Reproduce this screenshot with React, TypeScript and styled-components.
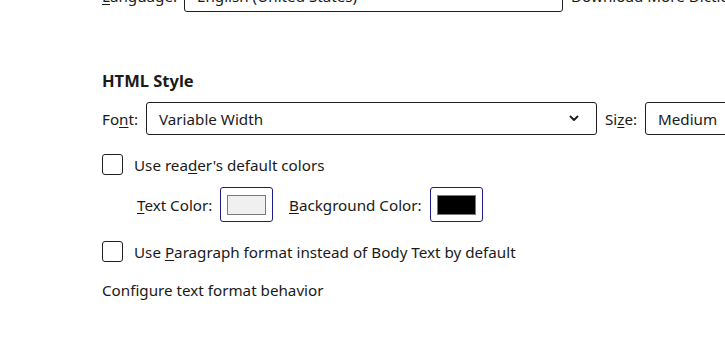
import React from "react";
import styled, { createGlobalStyle } from "styled-components";

const Global = createGlobalStyle`
  html, body { margin: 0; padding: 0; background: #ffffff; }
  body { font-family: "Noto Sans", "Open Sans", "Liberation Sans", sans-serif; color: #1a1a1a; }
`;

const Page = styled.div`
  width: 725px;
  height: 361px;
  overflow: hidden;
  padding-left: 102px;
  box-sizing: border-box;
  font-size: 15.2px;
`;

const Row = styled.div<{ $top?: number; $gap?: number }>`
  display: flex;
  align-items: center;
  margin-top: ${(p) => p.$top ?? 0}px;
  gap: ${(p) => p.$gap ?? 8}px;
  white-space: nowrap;
`;

const Label = styled.span<{ $w?: number }>`
  display: inline-block;
  width: ${(p) => (p.$w ? `${p.$w}px` : "auto")};
  flex-shrink: 0;
`;

const Key = styled.span`
  text-decoration: underline;
  text-underline-offset: 2px;
`;

const Select = styled.div<{ $w: number }>`
  width: ${(p) => p.$w}px;
  height: 33px;
  box-sizing: border-box;
  border: 1px solid #1f1f1f;
  border-radius: 3px;
  display: flex;
  align-items: center;
  justify-content: space-between;
  padding: 0 17px 0 12px;
  flex-shrink: 0;
`;

const Heading = styled.div`
  font-weight: 700;
  font-size: 16.5px;
  margin-top: 58px;
  height: 22px;
  line-height: 22px;
`;

const Box = styled.div`
  width: 21px;
  height: 21px;
  box-sizing: border-box;
  border: 1px solid #1f1f1f;
  border-radius: 3px;
  flex-shrink: 0;
`;

const Swatch = styled.div`
  width: 53px;
  height: 35px;
  box-sizing: border-box;
  border: 1px solid #1c1c8c;
  border-radius: 3px;
  display: flex;
  align-items: center;
  justify-content: center;
  flex-shrink: 0;
`;

const Chip = styled.div<{ $c: string }>`
  width: 39px;
  height: 20px;
  box-sizing: border-box;
  border: 1px solid #7a7a7a;
  background: ${(p) => p.$c};
`;

const Note = styled.div`
  margin-top: 18px;
  height: 20px;
  line-height: 20px;
`;

const Chevron = () => (
  <svg width="10" height="7" viewBox="0 0 10 7">
    <path d="M1.5 1.5 L5 5 L8.5 1.5" fill="none" stroke="#1a1a1a" strokeWidth="1.8" strokeLinecap="round" strokeLinejoin="round" />
  </svg>
);

export default function App() {
  return (
    <>
      <Global />
      <Page>
        <Row $top={-21} $gap={0}>
          <Label $w={82}>
            <Key>L</Key>anguage:
          </Label>
          <Select $w={379}>English (United States)</Select>
          <Label style={{ marginLeft: 8 }}>Download More Dictionaries</Label>
        </Row>
        <Heading>HTML Style</Heading>
        <Row $top={10} $gap={0}>
          <Label $w={44}>
            Fo<Key>n</Key>t:
          </Label>
          <Select $w={451}>
            <span>Variable Width</span>
            <Chevron />
          </Select>
          <Label $w={40} style={{ marginLeft: 8 }}>
            Si<Key>z</Key>e:
          </Label>
          <Select $w={140}>Medium</Select>
        </Row>
        <Row $top={19} $gap={11}>
          <Box />
          <span>
            Use rea<Key>d</Key>er's default colors
          </span>
        </Row>
        <Row $top={12} $gap={0} style={{ paddingLeft: 35 }}>
          <Label $w={83}>
            <Key>T</Key>ext Color:
          </Label>
          <Swatch>
            <Chip $c="#f0f0f0" />
          </Swatch>
          <Label $w={141} style={{ marginLeft: 16 }}>
            <Key>B</Key>ackground Color:
          </Label>
          <Swatch>
            <Chip $c="#000000" />
          </Swatch>
        </Row>
        <Row $top={19} $gap={11}>
          <Box />
          <span>
            Use <Key>P</Key>aragraph format instead of Body Text by default
          </span>
        </Row>
        <Note>Configure text format behavior</Note>
      </Page>
    </>
  );
}
